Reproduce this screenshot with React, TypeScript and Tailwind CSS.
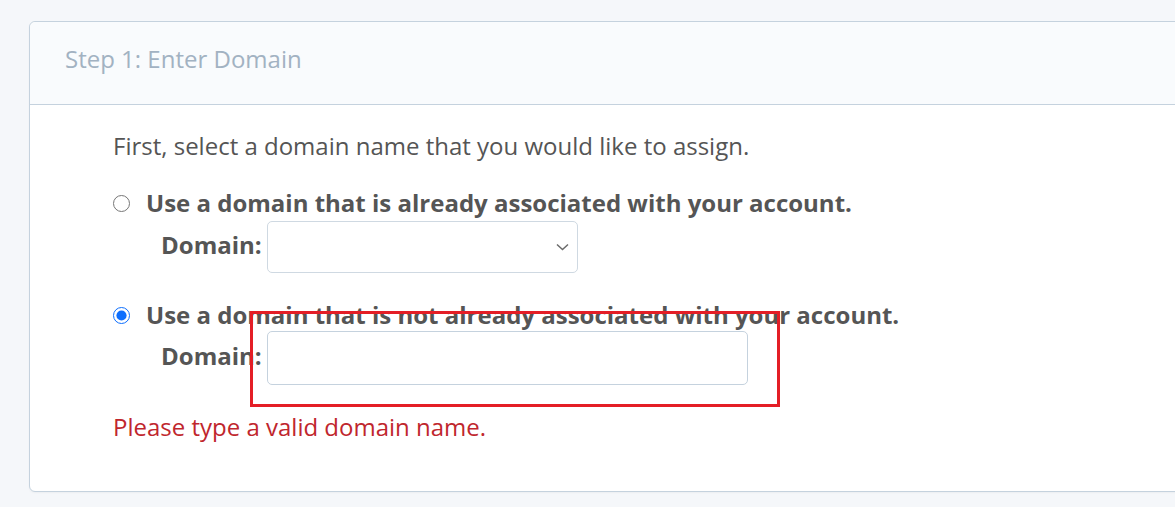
import React from "react"

const font = { fontFamily: '"Open Sans", "Noto Sans", sans-serif' }

const Chevron = () => (
  <svg width="13" height="8" viewBox="0 0 13 8" fill="none" className="pointer-events-none absolute right-[9px] top-[22px]">
    <path d="M1 1.5 L6.5 6.5 L12 1.5" stroke="#6b6b6b" strokeWidth="1.5" />
  </svg>
)

export default function App() {
  return (
    <div className="relative h-[507px] w-[1175px] overflow-hidden bg-[#f5f7fa]" style={font}>
      <div className="ml-[29px] mt-[21px] w-[1200px] rounded-[6px] border border-[#c5d2de] bg-white shadow-[0_1px_2px_rgba(0,0,0,0.04)]">
        {/* card header */}
        <div className="flex h-[83px] items-center rounded-t-[6px] border-b border-[#c5d2de] bg-[#f9fbfd] pb-[8px] pl-[35px]">
          <span className="text-[24px] leading-[32px] text-[#a2b2c2]">Step 1: Enter Domain</span>
        </div>

        {/* card body */}
        <div className="flex flex-col pb-[48px] pl-[83px] pt-[25px] text-[#555555]">
          <p className="text-[24px] leading-[32px]">First, select a domain name that you would like to assign.</p>

          <label className="mt-[25px] flex h-[32px] items-center gap-[16px]">
            <input type="radio" name="domainType" className="h-[17px] w-[17px] accent-[#0d6efd]" />
            <span className="text-[24px] font-bold leading-[32px]">Use a domain that is already associated with your account.</span>
          </label>
          <div className="mt-[2px] flex items-center pl-[48px]">
            <span className="mb-[5px] w-[106px] text-[24px] font-bold leading-[32px] text-[#555555]">Domain:</span>
            <div className="relative">
              <select className="h-[52px] w-[311px] appearance-none rounded-[5px] border border-[#cfd9e2] bg-white px-3 outline-none"></select>
              <Chevron />
            </div>
          </div>

          <label className="mt-[26px] flex h-[32px] items-center gap-[16px]">
            <input type="radio" name="domainType" defaultChecked className="h-[17px] w-[17px] accent-[#0d6efd]" />
            <span className="text-[24px] font-bold leading-[32px]">Use a domain that is not already associated with your account.</span>
          </label>
          <div className="mt-[0px] flex items-center pl-[48px]">
            <span className="mb-[4px] w-[106px] text-[24px] font-bold leading-[32px] text-[#555555]">Domain:</span>
            <input type="text" className="h-[54px] w-[481px] rounded-[5px] border border-[#c5d2de] bg-white px-3 outline-none" />
          </div>

          <p className="mt-[26px] text-[24px] leading-[32px] text-[#c0262d]">Please type a valid domain name.</p>
        </div>
      </div>

      {/* red annotation box */}
      <div className="absolute left-[250px] top-[311px] h-[96px] w-[530px] border-[3px] border-[#e41e26]"></div>
    </div>
  )
}
